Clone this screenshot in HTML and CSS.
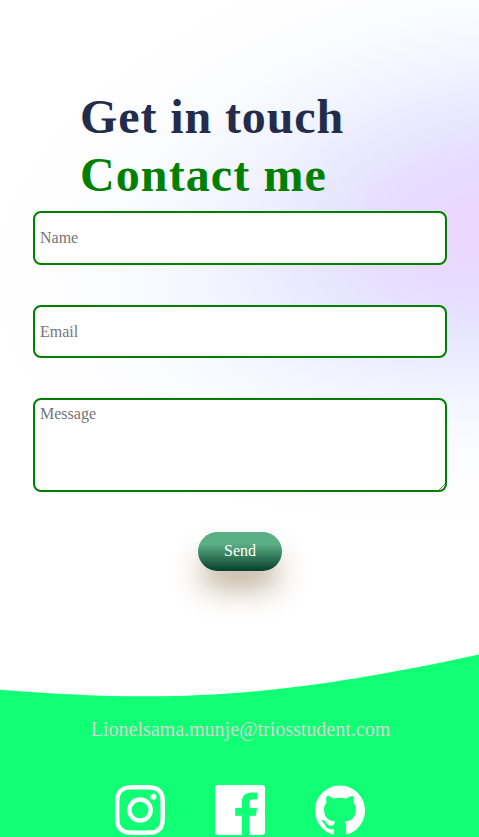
FILE: index.html
```html
<!DOCTYPE html>
<html lang="en">
<head>
<meta charset="utf-8">
<title>Contact me</title>
<link rel="stylesheet" href="styles.css">
</head>
<body>
<svg class="glow" viewBox="0 0 479 837" aria-hidden="true">
  <defs>
    <radialGradient id="glow" gradientUnits="userSpaceOnUse" cx="0" cy="0" r="1" gradientTransform="translate(500 225) rotate(-9) scale(540 308)">
      <stop offset="0" stop-color="#ecd6ff"/>
      <stop offset=".12" stop-color="#ead9ff"/>
      <stop offset=".24" stop-color="#e6deff"/>
      <stop offset=".38" stop-color="#e9e9ff"/>
      <stop offset=".53" stop-color="#f1f4ff"/>
      <stop offset=".69" stop-color="#fafbff"/>
      <stop offset=".86" stop-color="#fefeff"/>
      <stop offset="1" stop-color="#fff"/>
    </radialGradient>
  </defs>
  <rect width="479" height="837" fill="url(#glow)"/>
</svg>
<main class="contact">
  <h1 class="heading">Get in touch <span class="heading-accent">Contact me</span></h1>
  <form class="form">
    <input class="field" type="text" placeholder="Name">
    <input class="field field-email" type="email" placeholder="Email">
    <textarea class="field field-message" placeholder="Message"></textarea>
    <button class="send" type="button">Send</button>
  </form>
</main>
<footer class="footer">
  <svg class="wave" viewBox="0 0 479 50" preserveAspectRatio="none" aria-hidden="true"><path fill="#10ff75" d="M0 39.7C160 52 265 51 479 4.5V50H0Z"/></svg>
  <div class="footer-body">
    <a class="email">Lionelsama.munje@triosstudent.com</a>
    <div class="socials">
      <svg class="icon" viewBox="0 0 24 24"><path d="M12 0C8.74 0 8.333.015 7.053.072 5.775.132 4.905.333 4.14.63c-.789.306-1.459.717-2.126 1.384S.935 3.35.63 4.14C.333 4.905.131 5.775.072 7.053.012 8.333 0 8.74 0 12s.015 3.667.072 4.947c.06 1.277.261 2.148.558 2.913.306.788.717 1.459 1.384 2.126.667.666 1.336 1.079 2.126 1.384.766.296 1.636.499 2.913.558C8.333 23.988 8.74 24 12 24s3.667-.015 4.947-.072c1.277-.06 2.148-.262 2.913-.558.788-.306 1.459-.718 2.126-1.384.666-.667 1.079-1.335 1.384-2.126.296-.765.499-1.636.558-2.913.06-1.28.072-1.687.072-4.947s-.015-3.667-.072-4.947c-.06-1.277-.262-2.149-.558-2.913-.306-.789-.718-1.459-1.384-2.126C21.319 1.347 20.651.935 19.86.63c-.765-.297-1.636-.499-2.913-.558C15.667.012 15.26 0 12 0zm0 2.16c3.203 0 3.585.016 4.85.071 1.17.055 1.805.249 2.227.415.562.217.96.477 1.382.896.419.42.679.819.896 1.381.164.422.36 1.057.413 2.227.057 1.266.07 1.646.07 4.85s-.015 3.585-.074 4.85c-.061 1.17-.256 1.805-.421 2.227-.224.562-.479.96-.899 1.382-.419.419-.824.679-1.38.896-.42.164-1.065.36-2.235.413-1.274.057-1.649.07-4.859.07-3.211 0-3.586-.015-4.859-.074-1.171-.061-1.816-.256-2.236-.421-.569-.224-.96-.479-1.379-.899-.421-.419-.69-.824-.9-1.38-.165-.42-.359-1.065-.42-2.235-.045-1.26-.061-1.649-.061-4.844 0-3.196.016-3.586.061-4.861.061-1.17.255-1.814.42-2.234.21-.57.479-.96.9-1.381.419-.419.81-.689 1.379-.898.42-.166 1.051-.361 2.221-.421 1.275-.045 1.65-.06 4.859-.06l.045.03zm0 3.678a6.162 6.162 0 1 0 0 12.324 6.162 6.162 0 1 0 0-12.324zM12 16c-2.21 0-4-1.79-4-4s1.79-4 4-4 4 1.79 4 4-1.79 4-4 4z"/><circle cx="18.406" cy="5.595" r="1.44"/></svg>
      <svg class="icon" viewBox="0 0 24 24"><path d="M22.676 0H1.324C.593 0 0 .593 0 1.324v21.352C0 23.408.593 24 1.324 24h11.494v-9.294H9.689v-3.621h3.129V8.41c0-3.099 1.894-4.785 4.659-4.785 1.325 0 2.464.097 2.796.141v3.24h-1.921c-1.5 0-1.792.721-1.792 1.771v2.311h3.584l-.465 3.63H16.56V24h6.115c.733 0 1.325-.592 1.325-1.324V1.324C24 .593 23.408 0 22.676 0"/></svg>
      <svg class="icon" viewBox="0 0 24 24"><path d="M12 .297c-6.63 0-12 5.373-12 12 0 5.303 3.438 9.8 8.205 11.385.6.113.82-.258.82-.577 0-.285-.01-1.04-.015-2.04-3.338.724-4.042-1.61-4.042-1.61C4.422 18.07 3.633 17.7 3.633 17.7c-1.087-.744.084-.729.084-.729 1.205.084 1.838 1.236 1.838 1.236 1.07 1.835 2.809 1.305 3.495.998.108-.776.417-1.305.76-1.605-2.665-.3-5.466-1.332-5.466-5.93 0-1.31.465-2.38 1.235-3.22-.135-.303-.54-1.523.105-3.176 0 0 1.005-.322 3.3 1.23.96-.267 1.98-.399 3-.405 1.02.006 2.04.138 3 .405 2.28-1.552 3.285-1.23 3.285-1.23.645 1.653.24 2.873.12 3.176.765.84 1.23 1.91 1.23 3.22 0 4.61-2.805 5.625-5.475 5.92.42.36.81 1.096.81 2.22 0 1.606-.015 2.896-.015 3.286 0 .315.21.69.825.57C20.565 22.092 24 17.592 24 12.297c0-6.627-5.373-12-12-12"/></svg>
    </div>
  </div>
</footer>
</body>
</html>
```
FILE: styles.css
```css
* {
  box-sizing: border-box;
}

html {
  background: #fff;
}

body {
  position: relative;
  z-index: 0;
  margin: 0;
  height: 837px;
  overflow: hidden;
  display: flex;
  flex-direction: column;
  font-family: "Liberation Serif", "Times New Roman", serif;
}

/* Soft tilted glow behind the form */
.glow {
  position: absolute;
  z-index: -1;
  inset: 0;
  width: 100%;
  height: 100%;
}

.contact {
  height: 650px;
  padding: 88px 32px 0 33px;
}

.heading {
  margin: 0;
  padding: 0 48px 8px 47px;
  font-size: 48px;
  line-height: 57.6px;
  letter-spacing: .9px;
  color: #232c4b;
}

.heading-accent {
  display: block;
  letter-spacing: 1.1px;
  color: green;
}

.form {
  display: flex;
  flex-direction: column;
  gap: 40px;
}

.field {
  width: 100%;
  height: 53.4px;
  padding: 5px;
  border: 2px solid green;
  border-radius: 8px;
  background: #fff;
  font: 16px "Liberation Serif", "Times New Roman", serif;
  outline: none;
}

.field-email {
  padding-top: 7px;
}

.field-message {
  display: block;
  height: 94px;
  resize: vertical;
}

.field-message::-webkit-resizer {
  background: linear-gradient(135deg, transparent 78%, #777 78% 81%, transparent 81% 87%, #777 87% 90%, transparent 90%);
}

.send {
  align-self: center;
  width: 84px;
  height: 39px;
  padding: 0;
  border: 0;
  border-radius: 20px;
  background: linear-gradient(#5baf85 30%, #07402b);
  box-shadow: 0 20px 30px -3px rgba(103, 62, 8, .42);
  color: #fff;
  font: 16px "Liberation Serif", "Times New Roman", serif;
}

.footer {
  flex: none;
}

.wave {
  display: block;
  width: 100%;
  height: 50px;
}

.footer-body {
  height: 137px;
  padding-top: 17px;
  background: #10ff75;
  text-align: center;
}

.email {
  display: block;
  padding-left: 2px;
  font-size: 20px;
  line-height: 24px;
  color: #d3d3d3;
}

.socials {
  display: flex;
  justify-content: center;
  gap: 50px;
  margin-top: 44px;
}

.icon {
  width: 50px;
  height: 50px;
  fill: #fff;
}
```
